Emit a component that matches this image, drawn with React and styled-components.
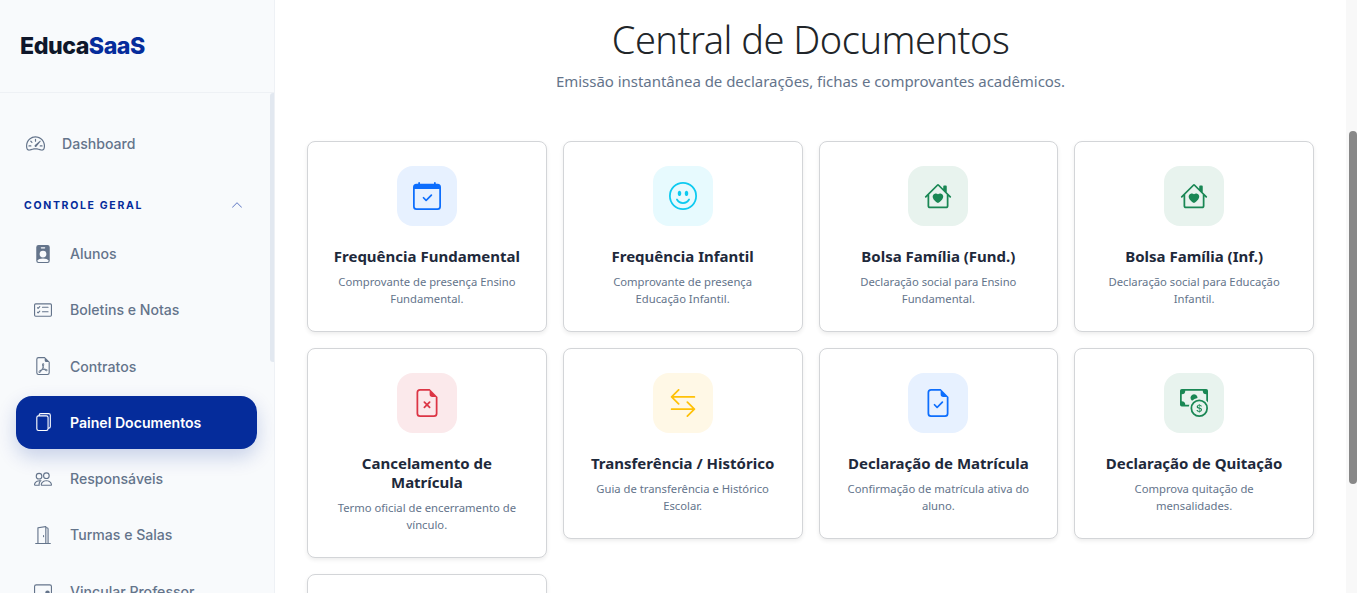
import React from "react";
import styled, { createGlobalStyle } from "styled-components";
import {
  BsSpeedometer2, BsChevronUp, BsPersonBadgeFill, BsCardChecklist, BsFileEarmarkPdf, BsFiles, BsPeople,
  BsDoorOpen, BsPersonVideo3, BsCalendarCheck, BsEmojiSmile, BsHouseHeart, BsFileEarmarkX, BsArrowLeftRight,
  BsFileEarmarkCheck, BsCashCoin,
} from "react-icons/bs";

const Global = createGlobalStyle`
  html, body { margin: 0; height: 100%; overflow: hidden; background: #fff; }
  #root { height: 100%; }
  * { box-sizing: border-box; }
`;
const Shell = styled.div`display: flex; height: 593px; width: 100%; overflow: hidden;`;
const Sidebar = styled.aside`
  position: relative; width: 275px; flex: none; display: flex; flex-direction: column; background: #f8fafc; border-right: 1px solid #eef1f5;
  font-family: Inter, sans-serif;
`;
const Brand = styled.div`
  height: 93px; flex: none; padding: 0 0 1px 20px; display: flex; align-items: center; border-bottom: 1px solid #eef1f5;
  font-family: Inter, sans-serif; font-weight: 800; font-size: 23.2px; color: #0f172a; letter-spacing: -0.5px;
  span { color: #052c9b; }
`;
const NavScroll = styled.nav`flex: 1; min-height: 0; overflow: hidden; padding: 23px 16px 0; display: flex; flex-direction: column;`;
const SideThumb = styled.div`
  position: absolute; top: 93px; right: 0; width: 4px; height: 269px; background: #e2e8f0; border-radius: 3px 0 0 3px;
`;
const TopLink = styled.a`
  display: flex; flex: none; align-items: center; gap: 17px; height: 54px; padding: 0 0 0 10px; color: #64748b; font-size: 14.1px; font-weight: 500;
  svg { font-size: 19px; flex: none; }
`;
const SectionHead = styled.div`
  margin-top: 24px; flex: none; height: 22px; padding: 0 15px 0 8px; display: flex; align-items: center; justify-content: space-between;
  color: #052c9b; font-size: 10.5px; font-weight: 700; letter-spacing: 1.68px;
  svg { font-size: 12px; color: #5f78c4; }
`;
const Items = styled.div`display: flex; flex-direction: column; gap: 3.3px; margin-top: 11px;`;
const Item = styled.a`
  display: flex; flex: none; align-items: center; gap: 18px; height: 53px; padding: 0 0 0 18px; border-radius: 16px; width: 241px;
  font-size: 14.1px; font-weight: ${p => (p.$active ? 600 : 500)};
  color: ${p => (p.$active ? "#fff" : "#64748b")};
  background: ${p => (p.$active ? "#052c9b" : "transparent")};
  box-shadow: ${p => (p.$active ? "0 8px 20px rgba(5,44,155,.2)" : "none")};
  svg { font-size: 18px; flex: none; }
`;
const Main = styled.main`
  position: relative; flex: 1; min-width: 0; overflow: hidden; background: #fff; padding: 15px 43px 0 32px;
  font-family: "Noto Sans", sans-serif;
`;
const ScrollTrack = styled.div`
  position: absolute; top: 0; right: 0; bottom: 0; width: 11px; background: #f8f8f8; padding: 131px 0 0 3px;
`;
const ScrollThumb = styled.div`height: 353px; background: #888; border-radius: 4px;`;
const Header = styled.header`text-align: center; margin-bottom: 48px;`;
const Title = styled.h1`margin: 0; font-size: 38px; letter-spacing: -0.5px; font-weight: 300; line-height: 48px; color: #212529;`;
const Sub = styled.p`margin: 6px 0 0; font-size: 15px; letter-spacing: -0.03px; line-height: 24px; color: #64748b;`;
const Grid = styled.div`display: grid; grid-template-columns: repeat(4, 1fr); gap: 16px; align-items: start;`;
const Card = styled.div`
  background: #fff; border: 1px solid #d3d5d8; border-radius: 8px; padding: 24px; text-align: center;
  box-shadow: 0 2px 4px rgba(0,0,0,.075);
`;
const IconBox = styled.div`
  width: 60px; height: 60px; margin: 0 auto 21px; border-radius: 16px; display: flex; align-items: center; justify-content: center;
  font-size: 28px; color: ${p => p.$c}; background: ${p => p.$bg};
`;
const CardTitle = styled.h3`margin: 0 0 7px; font-size: 15px; line-height: 19px; font-weight: 700; color: #1e293b;`;
const CardText = styled.p`margin: 0; font-size: 11.25px; line-height: 17px; color: #64748b;`;

const blue = ["#0d6efd", "#e7f1ff"], cyan = ["#0dcaf0", "#e7fafe"], green = ["#198754", "#e8f3ee"], red = ["#dc3545", "#fbe9eb"], yellow = ["#ffc107", "#fff8e6"];
const cards = [
  [BsCalendarCheck, blue, "Frequência Fundamental", "Comprovante de presença Ensino Fundamental."],
  [BsEmojiSmile, cyan, "Frequência Infantil", "Comprovante de presença Educação Infantil."],
  [BsHouseHeart, green, "Bolsa Família (Fund.)", "Declaração social para Ensino Fundamental."],
  [BsHouseHeart, green, "Bolsa Família (Inf.)", "Declaração social para Educação Infantil."],
  [BsFileEarmarkX, red, "Cancelamento de Matrícula", "Termo oficial de encerramento de vínculo."],
  [BsArrowLeftRight, yellow, "Transferência / Histórico", "Guia de transferência e Histórico Escolar."],
  [BsFileEarmarkCheck, blue, "Declaração de Matrícula", "Confirmação de matrícula ativa do aluno."],
  [BsCashCoin, green, "Declaração de Quitação", "Comprova quitação de mensalidades."],
];
const items = [
  [BsPersonBadgeFill, "Alunos"], [BsCardChecklist, "Boletins e Notas"], [BsFileEarmarkPdf, "Contratos"],
  [BsFiles, "Painel Documentos", true], [BsPeople, "Responsáveis"], [BsDoorOpen, "Turmas e Salas"], [BsPersonVideo3, "Vincular Professor"],
];

export default function App() {
  return (
    <Shell>
      <Global />
      <Sidebar>
        <Brand><div>Educa<span>SaaS</span></div></Brand>
        <NavScroll>
          <TopLink><BsSpeedometer2 />Dashboard</TopLink>
          <SectionHead>CONTROLE GERAL<BsChevronUp /></SectionHead>
          <Items>
            {items.map(([I, t, a]) => <Item key={t} $active={a}><I />{t}</Item>)}
          </Items>
        </NavScroll>
        <SideThumb />
      </Sidebar>
      <Main>
        <Header>
          <Title>Central de Documentos</Title>
          <Sub>Emissão instantânea de declarações, fichas e comprovantes acadêmicos.</Sub>
        </Header>
        <Grid>
          {cards.map(([I, [c, bg], t, d]) => (
            <Card key={t}>
              <IconBox $c={c} $bg={bg}><I /></IconBox>
              <CardTitle>{t}</CardTitle>
              <CardText>{d}</CardText>
            </Card>
          ))}
          <Card />
        </Grid>
        <ScrollTrack><ScrollThumb /></ScrollTrack>
      </Main>
    </Shell>
  );
}
